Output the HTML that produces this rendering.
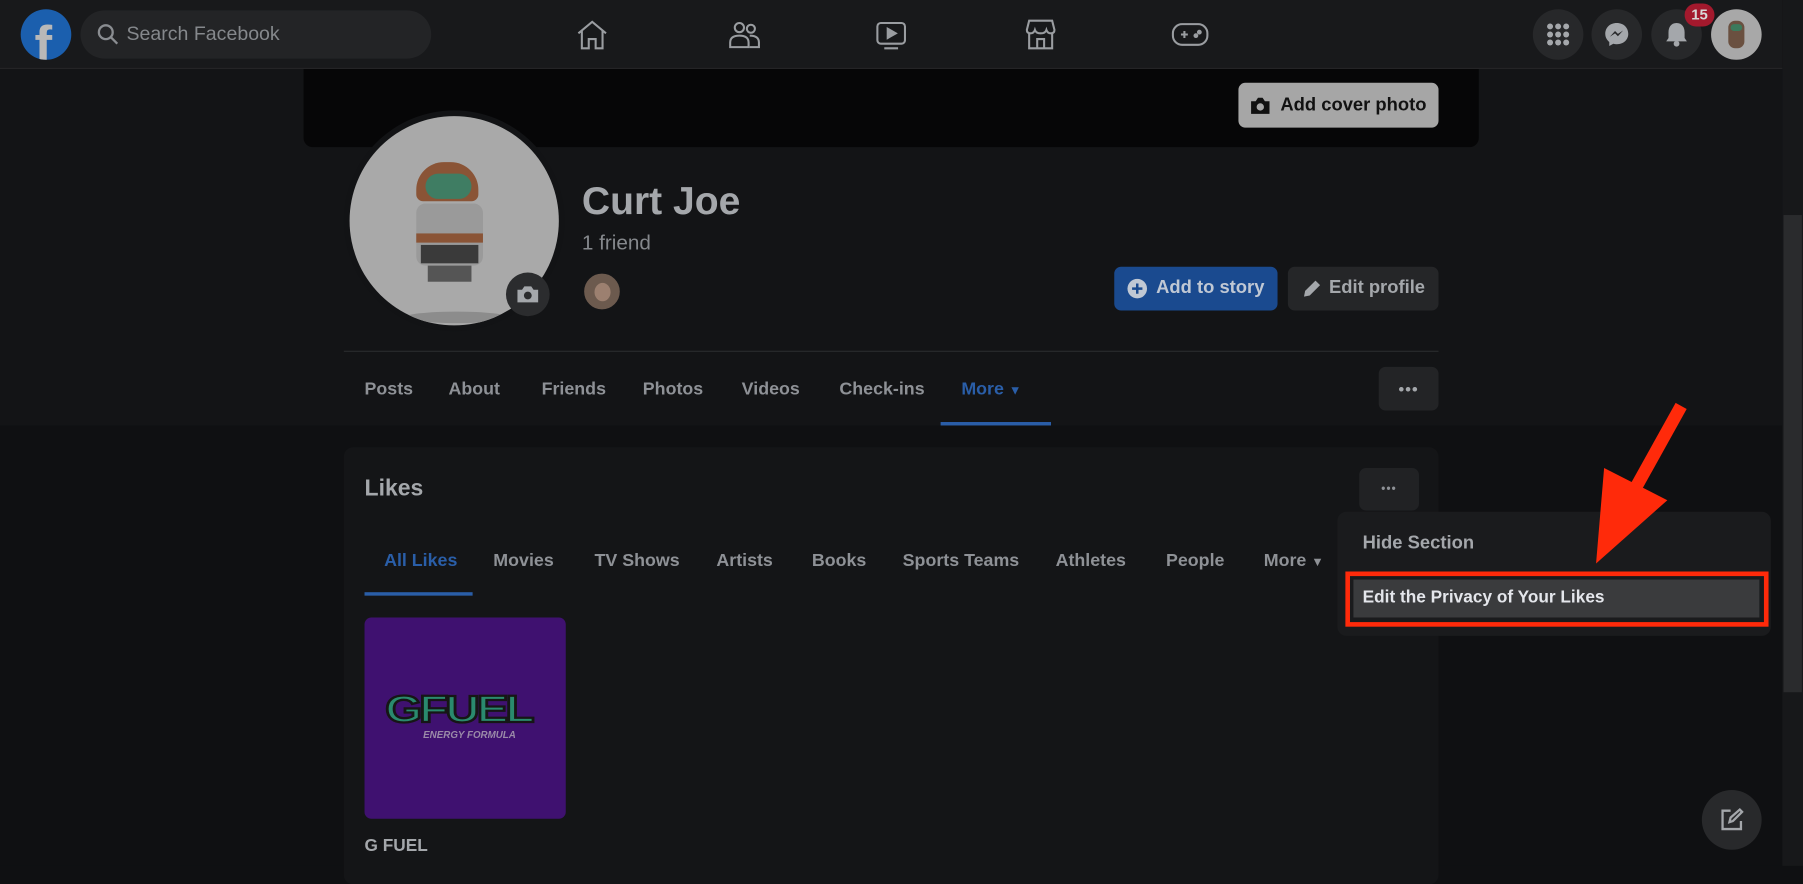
<!DOCTYPE html>
<html><head><meta charset="utf-8"><style>
*{margin:0;padding:0;box-sizing:border-box}
body{width:1803px;height:866px;overflow:hidden;background:#0f1012;font-family:"Liberation Sans",sans-serif}
#s{position:absolute;left:0;top:0;width:1568px;height:753px;transform:scale(1.1499);transform-origin:0 0;background:#0f1012}
.a{position:absolute}
.t{position:absolute;white-space:nowrap}
.btn{position:absolute;border-radius:6px;display:flex;align-items:center;justify-content:center;font-weight:bold;font-size:16px}
.tab{position:absolute;font-size:15.5px;font-weight:bold;color:#8e9196;top:330px}
.st{position:absolute;font-size:15.5px;font-weight:bold;color:#8e9196;top:479px}
</style></head><body><div id="s">
<div class="a" style="left:0;top:60px;width:1550px;height:310px;background:#131416"></div>
<!-- header -->
<div class="a" style="left:0;top:0;width:1550px;height:60px;background:#18191b;border-bottom:1px solid #242527"></div>
<div class="a" style="left:18px;top:8px;width:44px;height:44px;border-radius:50%;background:#1b5fae;overflow:hidden"><div class="t" style="left:12px;top:4px;font-size:46px;font-weight:bold;color:#b8b8b8">f</div></div>
<div class="a" style="left:70px;top:9px;width:305px;height:42px;border-radius:21px;background:#232426"></div>
<svg class="a" style="left:84px;top:20px" width="20" height="20"><circle cx="8" cy="8" r="6" fill="none" stroke="#8a8d91" stroke-width="2"/><line x1="12.5" y1="12.5" x2="18" y2="18" stroke="#8a8d91" stroke-width="2"/></svg>
<div class="t" style="left:110px;top:20px;font-size:17px;color:#85888c">Search Facebook</div>
<svg class="a" style="left:500px;top:16px" width="30" height="28" fill="none" stroke="#9a9da1" stroke-width="1.8"><path d="M3 13 L15 3 L27 13 M6 11 V26 H12 V18 H18 V26 H24 V11"/></svg>
<svg class="a" style="left:632px;top:16px" width="30" height="28" fill="none" stroke="#9a9da1" stroke-width="1.8"><circle cx="11" cy="8" r="4"/><circle cx="21" cy="9" r="3.5"/><path d="M3 25 V21 Q3 15 11 15 Q19 15 19 21 V25 Z M20 15 Q28 15 28 21 V25 H20"/></svg>
<svg class="a" style="left:760px;top:16px" width="30" height="28" fill="none" stroke="#9a9da1" stroke-width="1.8"><rect x="3" y="4" width="24" height="18" rx="3"/><path d="M12 9 L19 13 L12 17 Z" fill="#9a9da1"/><line x1="9" y1="26" x2="21" y2="26"/></svg>
<svg class="a" style="left:890px;top:15px" width="30" height="30" fill="none" stroke="#9a9da1" stroke-width="1.8"><path d="M5 3 H25 L27 11 Q27 14 24 14 Q21 14 20 11 Q19 14 15 14 Q11 14 10 11 Q9 14 6 14 Q3 14 3 11 Z M5 14 V27 H25 V14 M12 27 V19 H18 V27"/></svg>
<svg class="a" style="left:1018px;top:18px" width="34" height="24" fill="none" stroke="#9a9da1" stroke-width="1.8"><rect x="2" y="3" width="30" height="18" rx="8"/><path d="M9 12 H15 M12 9 V15"/><circle cx="22" cy="13" r="1.2" fill="#9a9da1"/><circle cx="25" cy="10" r="1.2" fill="#9a9da1"/></svg>
<div class="a" style="left:1333px;top:8px;width:44px;height:44px;border-radius:50%;background:#27282a"></div>
<svg class="a" style="left:1344px;top:19px" width="22" height="22" fill="#a4a7ab"><circle cx="4" cy="4" r="2.6"/><circle cx="11" cy="4" r="2.6"/><circle cx="18" cy="4" r="2.6"/><circle cx="4" cy="11" r="2.6"/><circle cx="11" cy="11" r="2.6"/><circle cx="18" cy="11" r="2.6"/><circle cx="4" cy="18" r="2.6"/><circle cx="11" cy="18" r="2.6"/><circle cx="18" cy="18" r="2.6"/></svg>
<div class="a" style="left:1384px;top:8px;width:44px;height:44px;border-radius:50%;background:#27282a"></div>
<svg class="a" style="left:1395px;top:19px" width="22" height="22"><path d="M11 1 C5 1 1 5 1 10.5 C1 13.5 2.5 16 4.5 17.5 V21 L8 19 C9 19.3 10 19.5 11 19.5 C17 19.5 21 15.5 21 10.5 C21 5 17 1 11 1Z" fill="#a4a7ab"/><path d="M5 13 L9.5 8 L12 10.5 L16.5 7.5 L12 12.5 L9.5 10 Z" fill="#27282a"/></svg>
<div class="a" style="left:1436px;top:8px;width:44px;height:44px;border-radius:50%;background:#27282a"></div>
<svg class="a" style="left:1448px;top:19px" width="20" height="22" fill="#a4a7ab"><path d="M10 1 C5 1 3 5 3 9 V14 L1 17 H19 L17 14 V9 C17 5 15 1 10 1Z"/><circle cx="10" cy="19" r="2.5"/></svg>
<div class="a" style="left:1465px;top:3px;width:26px;height:20px;border-radius:10px;background:#a3192d;color:#d8d8d8;font-size:13px;font-weight:bold;text-align:center;line-height:20px">15</div>
<div class="a" style="left:1488px;top:8px;width:44px;height:44px;border-radius:50%;background:#a8a8a8;overflow:hidden"><div class="a" style="left:15px;top:10px;width:14px;height:24px;border-radius:6px;background:#6a5040"></div><div class="a" style="left:17px;top:13px;width:10px;height:6px;border-radius:3px;background:#3c7a5c"></div></div>
<!-- scrollbar -->
<div class="a" style="left:1550px;top:0;width:18px;height:753px;background:#17181a"></div>
<div class="a" style="left:1551px;top:187px;width:16px;height:415px;background:#2a2b2d"></div>
<!-- cover -->
<div class="a" style="left:264px;top:60px;width:1022px;height:68px;background:#060607;border-radius:0 0 8px 8px"></div>
<div class="btn" style="left:1077px;top:72px;width:174px;height:39px;background:#a6a6a6;color:#111">
<svg width="18" height="16" style="margin-right:8px"><path d="M1 4 H5 L7 1 H11 L13 4 H17 V15 H1 Z" fill="#111"/><circle cx="9" cy="9" r="3.2" fill="#a6a6a6"/></svg>Add cover photo</div>
<!-- profile pic -->
<div class="a" style="left:299px;top:96px;width:192px;height:192px;border-radius:50%;background:#121315"></div>
<div class="a" style="left:304px;top:101px;width:182px;height:182px;border-radius:50%;background:#a9a9a9;overflow:hidden">
<div class="a" style="left:58px;top:40px;width:54px;height:34px;border-radius:24px 24px 6px 6px;background:#8a5436"></div>
<div class="a" style="left:66px;top:50px;width:40px;height:22px;border-radius:12px;background:#3f7d63"></div>
<div class="a" style="left:58px;top:76px;width:58px;height:54px;border-radius:8px;background:#9a9a9a"></div>
<div class="a" style="left:58px;top:102px;width:58px;height:8px;background:#8a5436"></div>
<div class="a" style="left:62px;top:112px;width:50px;height:16px;background:#3a3a3a"></div>
<div class="a" style="left:68px;top:130px;width:38px;height:14px;background:#555"></div>
<div class="a" style="left:48px;top:170px;width:90px;height:10px;border-radius:50%;background:#8c8c8c"></div>
</div>
<div class="a" style="left:440px;top:237px;width:38px;height:38px;border-radius:50%;background:#2b2c2e"></div>
<svg class="a" style="left:449px;top:247px" width="20" height="18"><path d="M1 5 H5 L7 2 H13 L15 5 H19 V16 H1 Z" fill="#a4a7ab"/><circle cx="10" cy="10" r="3.4" fill="#2b2c2e"/></svg>
<div class="t" style="left:506px;top:156px;font-size:34px;font-weight:bold;color:#a4a7ab">Curt Joe</div>
<div class="t" style="left:506px;top:201px;font-size:18px;color:#85888c">1 friend</div>
<div class="a" style="left:506px;top:236px;width:35px;height:35px;border-radius:50%;background:#6c5a4e;border:2px solid #131416;overflow:hidden"><div class="a" style="left:9px;top:8px;width:14px;height:16px;border-radius:50%;background:#9c8070"></div></div>
<div class="btn" style="left:969px;top:232px;width:142px;height:38px;background:#1a4a8f;color:#c0c8d4">
<svg width="18" height="18" style="margin-right:7px"><circle cx="9" cy="9" r="8.5" fill="#c0c8d4"/><path d="M9 4.5 V13.5 M4.5 9 H13.5" stroke="#1a4a8f" stroke-width="2.2"/></svg>Add to story</div>
<div class="btn" style="left:1120px;top:232px;width:131px;height:38px;background:#252628;color:#a4a7ab">
<svg width="18" height="18" style="margin-right:6px"><path d="M2 16 L3 11 L12 2 L16 6 L7 15 Z" fill="#a4a7ab"/></svg>Edit profile</div>
<div class="a" style="left:299px;top:305px;width:952px;height:1px;background:#2a2b2d"></div>
<div class="tab" style="left:317px">Posts</div>
<div class="tab" style="left:390px">About</div>
<div class="tab" style="left:471px">Friends</div>
<div class="tab" style="left:559px">Photos</div>
<div class="tab" style="left:645px">Videos</div>
<div class="tab" style="left:730px">Check-ins</div>
<div class="tab" style="left:836px;color:#2a5ea8">More <span style="font-size:11px">▼</span></div>
<div class="a" style="left:818px;top:367px;width:96px;height:3px;background:#2a5ea8"></div>
<div class="btn" style="left:1199px;top:319px;width:52px;height:38px;background:#232426;color:#a4a7ab;font-size:14px;letter-spacing:1px">•••</div>
<!-- likes card -->
<div class="a" style="left:299px;top:389px;width:952px;height:380px;background:#141517;border-radius:8px"></div>
<div class="t" style="left:317px;top:414px;font-size:20px;font-weight:bold;color:#a4a7ab">Likes</div>
<div class="btn" style="left:1182px;top:407px;width:52px;height:37px;background:#212224;color:#8e9196;font-size:10px;letter-spacing:1px">•••</div>
<div class="st" style="left:334px;color:#2a5ea8">All Likes</div>
<div class="st" style="left:429px">Movies</div>
<div class="st" style="left:517px">TV Shows</div>
<div class="st" style="left:623px">Artists</div>
<div class="st" style="left:706px">Books</div>
<div class="st" style="left:785px">Sports Teams</div>
<div class="st" style="left:918px">Athletes</div>
<div class="st" style="left:1014px">People</div>
<div class="st" style="left:1099px">More <span style="font-size:11px">▼</span></div>
<div class="a" style="left:317px;top:515px;width:94px;height:3px;background:#2a5ea8"></div>
<div class="a" style="left:317px;top:537px;width:175px;height:175px;background:#3f1170;border-radius:6px"></div>
<div class="t" style="left:335px;top:598px;font-size:33px;font-weight:900;color:#2a8a6e;-webkit-text-stroke:2px #161616;letter-spacing:-2px;transform:scaleX(1.25);transform-origin:0 0">GFUEL</div>
<div class="t" style="left:368px;top:634px;font-size:8.5px;font-weight:bold;font-style:italic;color:#9a8aa8">ENERGY FORMULA</div>
<div class="t" style="left:317px;top:727px;font-size:15px;font-weight:bold;color:#a4a7ab">G FUEL</div>
<!-- dropdown -->
<div class="a" style="left:1163px;top:445px;width:377px;height:108px;background:#1a1b1d;border-radius:8px"></div>
<div class="t" style="left:1185px;top:464px;font-size:16px;font-weight:bold;color:#a4a7ab">Hide Section</div>
<div class="a" style="left:1170px;top:497px;width:368px;height:48px;border:4px solid #ff2a0a"></div>
<div class="a" style="left:1177px;top:504px;width:353px;height:33px;background:#3a3b3d"></div>
<div class="t" style="left:1185px;top:511px;font-size:15px;font-weight:bold;color:#e4e6eb">Edit the Privacy of Your Likes</div>
<!-- arrow -->
<svg class="a" style="left:1380px;top:345px" width="100" height="150"><line x1="82" y1="8" x2="42" y2="80" stroke="#ff2a0a" stroke-width="11"/><polygon points="8,145 15,62 70,90" fill="#ff2a0a"/></svg>
<!-- compose -->
<div class="a" style="left:1480px;top:687px;width:52px;height:52px;border-radius:50%;background:#28292b"></div>
<svg class="a" style="left:1495px;top:702px" width="22" height="22" fill="none" stroke="#a4a7ab" stroke-width="2"><path d="M10 3 H3 V19 H19 V12"/><path d="M9 13 L10 9 L18 2 L20 4 L12 12 Z"/></svg>
</div></body></html>
